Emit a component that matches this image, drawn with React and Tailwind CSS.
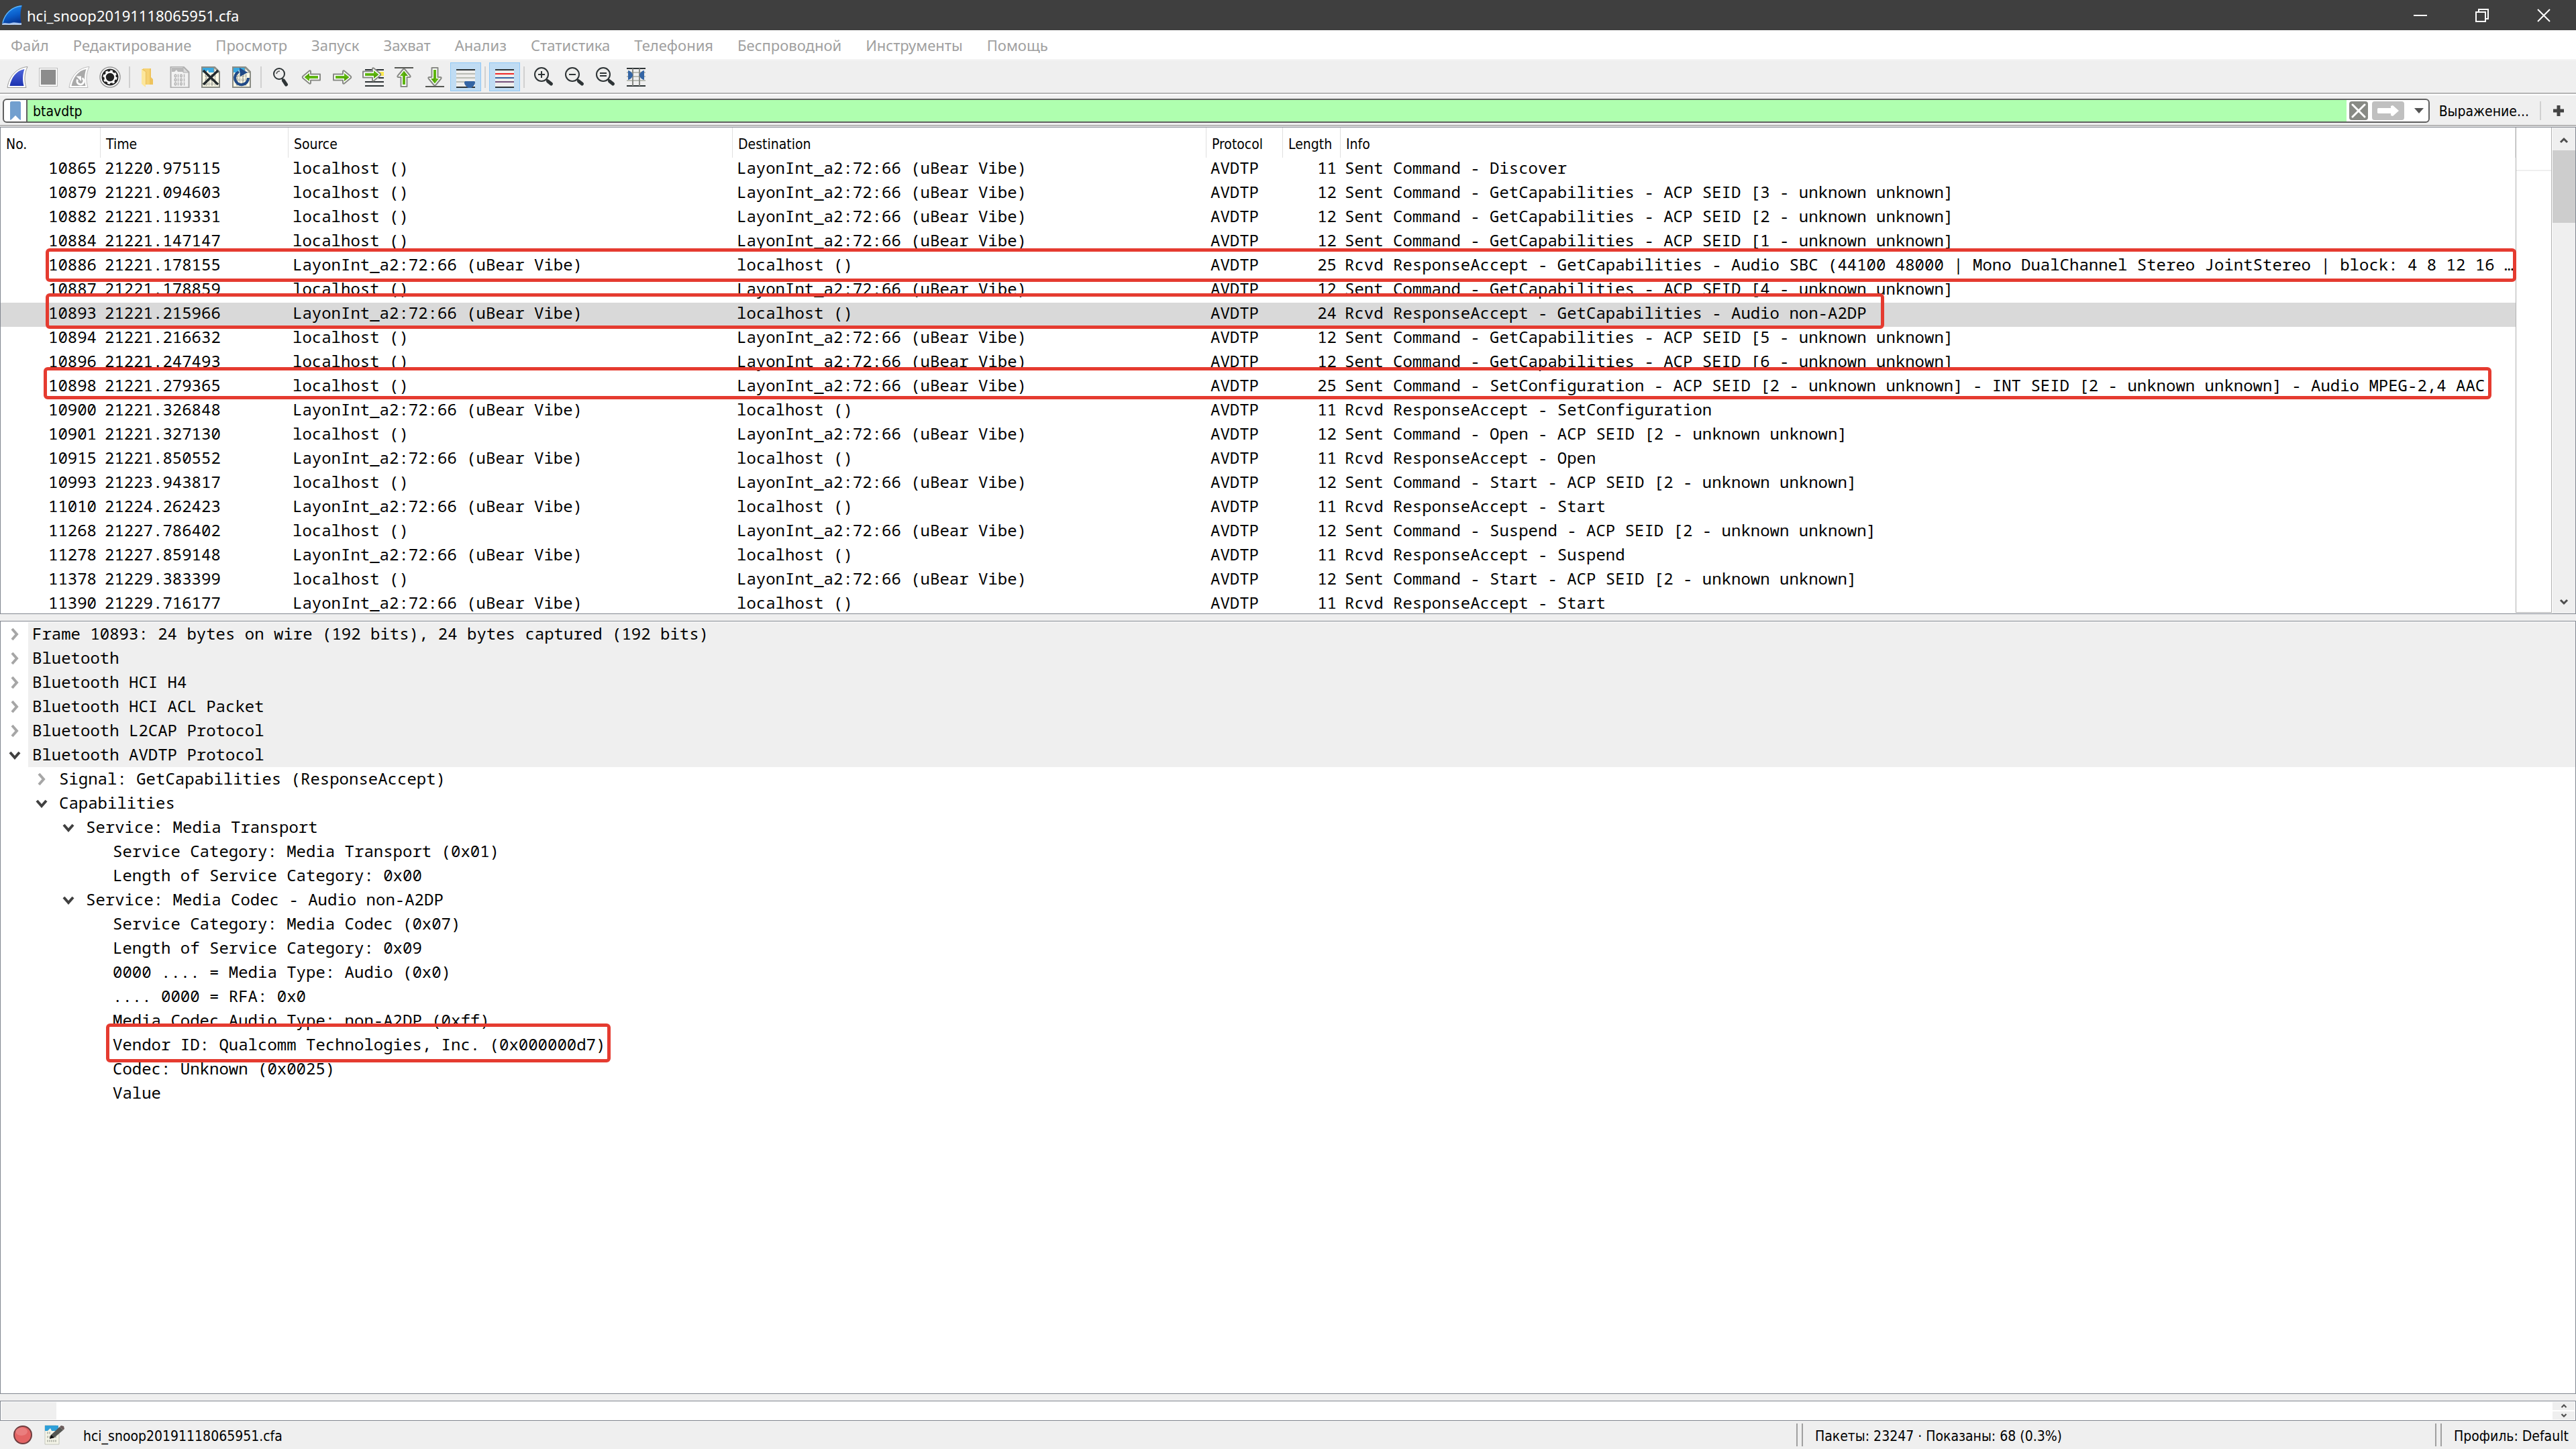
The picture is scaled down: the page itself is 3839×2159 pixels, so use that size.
import React, { useState } from 'react';

const UBEAR = 'LayonInt_a2:72:66 (uBear Vibe)';
const LOCAL = 'localhost ()';

const menus = [
  'Файл',
  'Редактирование',
  'Просмотр',
  'Запуск',
  'Захват',
  'Анализ',
  'Статистика',
  'Телефония',
  'Беспроводной',
  'Инструменты',
  'Помощь'
];

const packets = [
  { no: 10865, time: '21220.975115', out: true, len: 11, info: 'Sent Command - Discover' },
  { no: 10879, time: '21221.094603', out: true, len: 12, info: 'Sent Command - GetCapabilities - ACP SEID [3 - unknown unknown]' },
  { no: 10882, time: '21221.119331', out: true, len: 12, info: 'Sent Command - GetCapabilities - ACP SEID [2 - unknown unknown]' },
  { no: 10884, time: '21221.147147', out: true, len: 12, info: 'Sent Command - GetCapabilities - ACP SEID [1 - unknown unknown]' },
  { no: 10886, time: '21221.178155', out: false, len: 25, info: 'Rcvd ResponseAccept - GetCapabilities - Audio SBC (44100 48000 | Mono DualChannel Stereo JointStereo | block: 4 8 12 16 …' },
  { no: 10887, time: '21221.178859', out: true, len: 12, info: 'Sent Command - GetCapabilities - ACP SEID [4 - unknown unknown]' },
  { no: 10893, time: '21221.215966', out: false, len: 24, info: 'Rcvd ResponseAccept - GetCapabilities - Audio non-A2DP' },
  { no: 10894, time: '21221.216632', out: true, len: 12, info: 'Sent Command - GetCapabilities - ACP SEID [5 - unknown unknown]' },
  { no: 10896, time: '21221.247493', out: true, len: 12, info: 'Sent Command - GetCapabilities - ACP SEID [6 - unknown unknown]' },
  { no: 10898, time: '21221.279365', out: true, len: 25, info: 'Sent Command - SetConfiguration - ACP SEID [2 - unknown unknown] - INT SEID [2 - unknown unknown] - Audio MPEG-2,4 AAC' },
  { no: 10900, time: '21221.326848', out: false, len: 11, info: 'Rcvd ResponseAccept - SetConfiguration' },
  { no: 10901, time: '21221.327130', out: true, len: 12, info: 'Sent Command - Open - ACP SEID [2 - unknown unknown]' },
  { no: 10915, time: '21221.850552', out: false, len: 11, info: 'Rcvd ResponseAccept - Open' },
  { no: 10993, time: '21223.943817', out: true, len: 12, info: 'Sent Command - Start - ACP SEID [2 - unknown unknown]' },
  { no: 11010, time: '21224.262423', out: false, len: 11, info: 'Rcvd ResponseAccept - Start' },
  { no: 11268, time: '21227.786402', out: true, len: 12, info: 'Sent Command - Suspend - ACP SEID [2 - unknown unknown]' },
  { no: 11278, time: '21227.859148', out: false, len: 11, info: 'Rcvd ResponseAccept - Suspend' },
  { no: 11378, time: '21229.383399', out: true, len: 12, info: 'Sent Command - Start - ACP SEID [2 - unknown unknown]' },
  { no: 11390, time: '21229.716177', out: false, len: 11, info: 'Rcvd ResponseAccept - Start' }
];

const columns = [
  { name: 'No.', col: 'w-[149px]' },
  { name: 'Time', col: 'w-[280px]' },
  { name: 'Source', col: 'w-[662px]' },
  { name: 'Destination', col: 'w-[706px]' },
  { name: 'Protocol', col: 'w-[114px]' },
  { name: 'Length', col: 'w-[86px]' },
  { name: 'Info', col: '' }
];

// state: open / closed / leaf
const details = [
  { level: 0, state: 'closed', text: 'Frame 10893: 24 bytes on wire (192 bits), 24 bytes captured (192 bits)' },
  { level: 0, state: 'closed', text: 'Bluetooth' },
  { level: 0, state: 'closed', text: 'Bluetooth HCI H4' },
  { level: 0, state: 'closed', text: 'Bluetooth HCI ACL Packet' },
  { level: 0, state: 'closed', text: 'Bluetooth L2CAP Protocol' },
  { level: 0, state: 'open', text: 'Bluetooth AVDTP Protocol' },
  { level: 1, state: 'closed', text: 'Signal: GetCapabilities (ResponseAccept)' },
  { level: 1, state: 'open', text: 'Capabilities' },
  { level: 2, state: 'open', text: 'Service: Media Transport' },
  { level: 3, state: 'leaf', text: 'Service Category: Media Transport (0x01)' },
  { level: 3, state: 'leaf', text: 'Length of Service Category: 0x00' },
  { level: 2, state: 'open', text: 'Service: Media Codec - Audio non-A2DP' },
  { level: 3, state: 'leaf', text: 'Service Category: Media Codec (0x07)' },
  { level: 3, state: 'leaf', text: 'Length of Service Category: 0x09' },
  { level: 3, state: 'leaf', text: '0000 .... = Media Type: Audio (0x0)' },
  { level: 3, state: 'leaf', text: '.... 0000 = RFA: 0x0' },
  { level: 3, state: 'leaf', text: 'Media Codec Audio Type: non-A2DP (0xff)' },
  { level: 3, state: 'leaf', text: 'Vendor ID: Qualcomm Technologies, Inc. (0x000000d7)' },
  { level: 3, state: 'leaf', text: 'Codec: Unknown (0x0025)' },
  { level: 3, state: 'leaf', text: 'Value' }
];

const indent = ['pl-0', 'pl-10', 'pl-20', 'pl-[120px]'];

/* ---------- icons ---------- */

const Svg = ({ w = 32, h = 32, children }) => (
  <svg width={w} height={h} viewBox={`0 0 ${w} ${h}`} fill="none" className="block shrink-0" aria-hidden="true">
    {children}
  </svg>
);

const AppLogo = () => (
  <Svg w={32} h={32}>
    <defs>
      <linearGradient id="logo" x1="0.3" y1="0" x2="0.6" y2="1">
        <stop offset="0" stopColor="#1d8af0" />
        <stop offset="0.55" stopColor="#0a5cc8" />
        <stop offset="1" stopColor="#06308a" />
      </linearGradient>
    </defs>
    <path d="M1 30C3 16 14 2 31 1c-3 8-3 17-1 29z" fill="url(#logo)" />
    <path d="M2 27C5 14 15 3 30 2" stroke="#5db4f7" strokeWidth="1.5" />
    <path d="M1 28c5-2 9 1 14-1s10 1 15 0v3H1z" fill="#8fb4ea" />
    <path d="M2 29c6-1 9 1 14 0s9 1 14 0" stroke="#e4effc" strokeWidth="1" />
  </Svg>
);

const FinIcon = () => (
  <Svg>
    <defs>
      <linearGradient id="fin" x1="0" y1="0" x2="0" y2="1">
        <stop offset="0" stopColor="#4f67dc" />
        <stop offset="1" stopColor="#1c32b0" />
      </linearGradient>
    </defs>
    <path d="M1 31.500C3 17 13 2 31 0.500c-5 10-5 21-2 31z" fill="#fff" stroke="#999" />
    <path d="M4.500 29C7 17 14 6 26.500 4c-3 8-3 17-1 25z" fill="url(#fin)" />
  </Svg>
);

const StopIcon = () => (
  <Svg>
    <rect x="2.500" y="2.500" width="27" height="27" fill="#fff" stroke="#bbb" />
    <rect x="4" y="4" width="24" height="24" fill="#eee" />
    <rect x="5" y="5" width="22" height="22" fill="#8c8c8c" />
  </Svg>
);

const RestartIcon = () => (
  <Svg>
    <path d="M1 31.500C3 17 13 2 31 0.500c-5 10-5 21-2 31z" fill="#fff" stroke="#bbb" />
    <path d="M4.500 29C7 17 14 6 26.500 4c-3 8-3 17-1 25z" fill="#a9a9a9" />
    <path d="M20.500 17.500a5 5 0 1 1-7 2" stroke="#fff" strokeWidth="3" />
    <path d="M11.500 14.500h7.500v7.500z" fill="#fff" />
  </Svg>
);

const OptionsIcon = () => (
  <Svg>
    <circle cx="16" cy="16" r="15" fill="#fff" stroke="#999" strokeWidth="1.500" />
    <circle cx="16" cy="16" r="12.500" fill="#222" />
    <circle cx="16" cy="16" r="7.500" stroke="#fff" strokeWidth="2.500" />
    <circle cx="16" cy="16" r="9.300" stroke="#fff" strokeWidth="2.500" strokeDasharray="3.600 3.700" />
    <circle cx="16" cy="16" r="5" fill="#222" />
  </Svg>
);

const FolderIcon = () => (
  <Svg>
    <path d="M7 3h12v17h3v7H7z" fill="#f6d273" />
    <path d="M19 3h-2v24h5v-8l-3-3z" fill="#eec35c" />
    <path d="M5 4l6 4v23l-6-5z" fill="#fce69c" />
    <path d="M5 4h2l5 4v19h-1V8z" fill="#e9bf5c" />
  </Svg>
);

const Bits = ({ fill }) => (
  <g stroke={fill} strokeWidth="1.500">
    {[13, 19, 25].map((y) => (
      <g key={y}>
        <ellipse cx="9.500" cy={y + 1} rx="1.300" ry="1.900" />
        <path d={`M13.500 ${y - 1.500}v5M22.500 ${y - 1.500}v5`} />
        <ellipse cx="18" cy={y + 1} rx="1.300" ry="1.900" />
      </g>
    ))}
  </g>
);

const SaveIcon = () => (
  <Svg>
    <path d="M2.500 0.500h19l8 8v23h-27z" fill="#f2f2f2" stroke="#b0b0b0" strokeWidth="2" />
    <path d="M4 2h17v6H13l-2-3-3 3H4z" fill="#b9b9b9" />
    <path d="M21 1l8 8h-8z" fill="#d9d9d9" stroke="#b0b0b0" />
    <Bits fill="#b3b3b3" />
  </Svg>
);

const DocBase = () => (
  <>
    <path d="M3 1h19l7 7v23H3z" fill="#fdfbe8" stroke="#8b8d85" strokeWidth="2" />
    <path d="M4 2h17v7H13l-1-4-3 4H4z" fill="#3aa9e0" />
    <path d="M21 2l7 7h-7z" fill="#eef0ea" stroke="#8b8d85" />
    <Bits fill="#a5a79d" />
  </>
);

const CloseFileIcon = () => (
  <Svg>
    <DocBase />
    <path d="M5 6l22 21M27 6L5 27" stroke="#22292c" strokeWidth="3.500" />
  </Svg>
);

const ReloadIcon = () => (
  <Svg>
    <DocBase />
    <path d="M12 8a10 10 0 1 0 14 9" stroke="#204a87" strokeWidth="4" />
    <path d="M13 2l12 7-11 6z" fill="#204a87" />
  </Svg>
);

const FindIcon = () => (
  <Svg>
    <circle cx="14" cy="11" r="8" fill="#eee" stroke="#2e3436" strokeWidth="2" />
    <path d="M10 11a5 5 0 0 1 5-4" stroke="#555" strokeWidth="1.500" />
    <path d="M18 18l3 3" stroke="#2e3436" strokeWidth="2" />
    <path d="M20.500 21l4 6" stroke="#2e3436" strokeWidth="5" strokeLinecap="round" />
  </Svg>
);

// right pointing arrow, rotated around the centre for the other directions
const Arrow = ({ turn = 0 }) => (
  <g transform={`rotate(${turn} 16 16)`}>
    <path
      d="M3 11.500h14V7.500c0-1.500 1.500-1.500 2.500-.500l9 7.500c1 1 1 2 0 3l-9 7.500c-1 1-2.500 1-2.500-.500v-4H3z"
      fill="#fff"
      stroke="#888a85"
      strokeWidth="2"
      strokeLinejoin="round"
    />
    <path d="M6 14h13v-4l7.500 6-7.500 6v-4H6z" fill="#5fb711" />
    <path d="M6 17h13v5l7-6h-7z" fill="#4e9a06" opacity=".6" />
  </g>
);

const BackIcon = () => (
  <Svg>
    <Arrow turn={180} />
  </Svg>
);

const ForwardIcon = () => (
  <Svg>
    <Arrow />
  </Svg>
);

const GotoIcon = () => (
  <Svg w={36} h={32}>
    <path d="M6 5h28M26 17h8M6 23h28M6 29h28" stroke="#2e3436" strokeWidth="2" />
    <path d="M24 8h10v6H24z" fill="#fce94f" />
    <g transform="translate(0 -4)">
      <Arrow />
    </g>
  </Svg>
);

const FirstIcon = () => (
  <Svg>
    <path d="M2 2h28" stroke="#555753" strokeWidth="2" />
    <g transform="translate(0 1)">
      <Arrow turn={-90} />
    </g>
  </Svg>
);

const LastIcon = () => (
  <Svg>
    <path d="M2 30h28" stroke="#555753" strokeWidth="2" />
    <g transform="translate(0 -1)">
      <Arrow turn={90} />
    </g>
  </Svg>
);

const AutoScrollIcon = () => (
  <Svg>
    <path d="M2 5h28v26H2z" fill="#eeeeec" />
    <path d="M2 5h28M2 31h28" stroke="#2e3436" strokeWidth="2" />
    <path d="M2 11h28M2 17h28M2 23h28" stroke="#babdb6" strokeWidth="2" />
    <path d="M14 24c0-1.500 1-2 2-2h12c1 0 2 .500 2 2 0 3-3 6-5 7.500-2 1-4 1-6 0-2-1.500-5-4.500-5-7.500z" fill="#3465a4" />
  </Svg>
);

const ColorizeIcon = () => (
  <Svg>
    <path d="M2 5h28v26H2z" fill="#eeeeec" />
    <path d="M2 5h28M2 31h28" stroke="#2e3436" strokeWidth="2" />
    <path d="M2 11h28" stroke="#ef2929" strokeWidth="2" />
    <path d="M2 17h28" stroke="#3465a4" strokeWidth="2" />
    <path d="M2 23h28" stroke="#75507b" strokeWidth="2" />
  </Svg>
);

const ZoomIcon = ({ sign }) => (
  <Svg>
    <circle cx="13" cy="12" r="10" fill="#eeeeec" stroke="#2e3436" strokeWidth="2" />
    <path d={sign} stroke="#2e3436" strokeWidth="2" />
    <path d="M20 19l3 3" stroke="#2e3436" strokeWidth="3" />
    <path d="M22.500 22l5 4" stroke="#2e3436" strokeWidth="5" strokeLinecap="round" />
  </Svg>
);

const ResizeIcon = () => (
  <Svg>
    <path d="M2 9h28M2 15h28M2 21h28" stroke="#babdb6" strokeWidth="2" />
    <path d="M2 3h28M2 29h28" stroke="#2e3436" strokeWidth="2" />
    <path d="M11 3v26M21 3v26" stroke="#888a85" strokeWidth="2" />
    <path d="M4 6c3 0 7 4 7 7s-4 7-7 7zM28 6c-3 0-7 4-7 7s4 7 7 7z" fill="#3465a4" />
  </Svg>
);

const CommentIcon = () => (
  <Svg>
    <path d="M3 2h17l4 4v24H3z" fill="#f4f4e8" stroke="#c4c6bc" />
    <path d="M3 2h20v8H13l-2-4-4 4H3z" fill="#2f9fd8" />
    <path d="M6 13h6M6 19h5M15 19h6M6 25h15" stroke="#b9bbb0" strokeWidth="3" strokeDasharray="2 1" />
    <path d="M12 16L25 4l5 5-13 11-7 1z" fill="#555753" />
    <path d="M25 4l2-2 4 1 1 4-2 2z" fill="#6b5b5b" />
    <path d="M12 16l5 4-7 2z" fill="#111" />
  </Svg>
);

const chevrons = {
  up: { d: 'M5 13l5-5 5 5', stroke: '#4d4d4d', width: 3 },
  down: { d: 'M5 7l5 5 5-5', stroke: '#4d4d4d', width: 3 },
  closed: { d: 'M6 2l7 8-7 8', stroke: '#a6a6a6', width: 4 },
  open: { d: 'M3 6l7 8 7-8', stroke: '#404040', width: 4 }
};

const Chevron = ({ dir, size = 20 }) => (
  <svg width={size} height={size} viewBox="0 0 20 20" fill="none" className="block shrink-0" aria-hidden="true">
    <path d={chevrons[dir].d} stroke={chevrons[dir].stroke} strokeWidth={chevrons[dir].width} />
  </svg>
);

/* ---------- pieces ---------- */

const ToolButton = ({ label, active, children }) => (
  <button
    type="button"
    aria-label={label}
    className={`flex h-[43px] w-[46px] shrink-0 items-center justify-center border ${
      active ? 'border-[#90c8f6] bg-[#c0dcf3]' : 'border-transparent'
    }`}
  >
    {children}
  </button>
);

const ToolSeparator = () => (
  <div className="flex w-3 shrink-0 justify-center">
    <div className="h-8 w-[2px] bg-[#d0d0d0]" />
  </div>
);

const Highlight = ({ className }) => (
  <div className={`pointer-events-none absolute rounded-md border-[5px] border-[#e53b30] ${className}`} />
);

const TitleBar = () => (
  <header className="flex h-[45px] shrink-0 items-center bg-[#3f3f3f] pl-[2px] pr-[2px] text-white">
    <AppLogo />
    <h1 className="ml-[6px] text-[22px] leading-[32px]">hci_snoop20191118065951.cfa</h1>
    <div className="ml-auto flex">
      <button type="button" aria-label="Minimize" className="flex h-10 w-[92px] items-center justify-center">
        <Svg w={20} h={20}>
          <path d="M0 10h20" stroke="#fff" strokeWidth="2" />
        </Svg>
      </button>
      <button type="button" aria-label="Restore" className="flex h-10 w-[92px] items-center justify-center">
        <Svg w={20} h={20}>
          <path d="M1 5h14v14H1zM5 5V1h14v14h-4" stroke="#fff" strokeWidth="2" />
        </Svg>
      </button>
      <button type="button" aria-label="Close" className="flex h-10 w-[92px] items-center justify-center">
        <Svg w={20} h={20}>
          <path d="M1 1l18 18M19 1L1 19" stroke="#fff" strokeWidth="2" />
        </Svg>
      </button>
    </div>
  </header>
);

const MenuBar = () => (
  <nav className="flex h-[45px] shrink-0 items-center gap-9 border-b-2 border-[#f4f4f4] bg-white pl-4">
    {menus.map((name) => (
      <button key={name} type="button" className="text-[22px] leading-[32px] text-[#a0a0a0]">
        {name}
      </button>
    ))}
  </nav>
);

const ToolBar = () => (
  <div className="flex h-[52px] shrink-0 flex-col bg-[#efefef]">
    <div className="flex flex-1 items-center pl-[3px] pt-px">
      <ToolButton label="Start capture"><FinIcon /></ToolButton>
      <ToolButton label="Stop capture"><StopIcon /></ToolButton>
      <ToolButton label="Restart capture"><RestartIcon /></ToolButton>
      <ToolButton label="Capture options"><OptionsIcon /></ToolButton>
      <ToolSeparator />
      <ToolButton label="Open file"><FolderIcon /></ToolButton>
      <ToolButton label="Save file"><SaveIcon /></ToolButton>
      <ToolButton label="Close file"><CloseFileIcon /></ToolButton>
      <ToolButton label="Reload file"><ReloadIcon /></ToolButton>
      <ToolSeparator />
      <ToolButton label="Find packet"><FindIcon /></ToolButton>
      <ToolButton label="Previous packet"><BackIcon /></ToolButton>
      <ToolButton label="Next packet"><ForwardIcon /></ToolButton>
      <ToolButton label="Go to packet"><GotoIcon /></ToolButton>
      <ToolButton label="First packet"><FirstIcon /></ToolButton>
      <ToolButton label="Last packet"><LastIcon /></ToolButton>
      <ToolButton label="Auto scroll" active><AutoScrollIcon /></ToolButton>
      <ToolSeparator />
      <ToolButton label="Colorize" active><ColorizeIcon /></ToolButton>
      <ToolSeparator />
      <ToolButton label="Zoom in"><ZoomIcon sign="M8 12h10M13 7v10" /></ToolButton>
      <ToolButton label="Zoom out"><ZoomIcon sign="M8 12h10" /></ToolButton>
      <ToolButton label="Normal size"><ZoomIcon sign="M8 10h10M8 14h10" /></ToolButton>
      <ToolButton label="Resize columns"><ResizeIcon /></ToolButton>
    </div>
    <div className="h-1 border-t-2 border-[#b5b5b5] bg-white" />
  </div>
);

const FilterBar = () => {
  const [filter, setFilter] = useState('btavdtp');

  return (
    <div className="flex h-[46px] shrink-0 items-center border-b-2 border-[#b5b5b5] bg-[#efefef] pl-1 pt-[2px] text-black">
      <div className="flex h-9 flex-1 items-stretch overflow-hidden rounded-md border-2 border-[#606060] bg-white">
        <button type="button" aria-label="Bookmarks" className="flex w-[35px] items-center justify-center border-r-2 border-[#606060]">
          <Svg w={16} h={28}>
            <path d="M0 2c0-1 1-2 2-2h12c1 0 2 1 2 2v26l-2-1-6-6-6 6-2 1z" fill="#729fcf" />
          </Svg>
        </button>
        <input
          aria-label="Display filter"
          value={filter}
          onChange={(e) => setFilter(e.target.value)}
          className="min-w-0 flex-1 bg-[#afffaf] pl-2 pt-1 font-['DejaVu_Sans_Condensed','Liberation_Sans',sans-serif] text-[21px] outline-none"
        />
        <div className="flex items-center pl-1">
          <button type="button" aria-label="Clear filter" className="flex size-7 items-center justify-center rounded-sm bg-[#888a85]">
            <Svg w={22} h={22}>
              <path d="M2 2l18 18M20 2L2 20" stroke="#fff" strokeWidth="3" strokeLinecap="round" />
            </Svg>
          </button>
          <button type="button" aria-label="Apply filter" className="ml-[6px] flex h-7 w-12 items-center justify-center rounded-sm bg-[#c0c0c0]">
            <Svg w={32} h={16}>
              <path d="M1 4h19V1l3-1 9 8-9 8-3-1v-3H1l-1-1V5z" fill="#fff" />
            </Svg>
          </button>
          <button type="button" aria-label="Recent filters" className="flex h-7 w-9 items-center justify-center pl-2">
            <Svg w={14} h={8}>
              <path d="M0 0h14L7 8z" fill="#555" />
            </Svg>
          </button>
        </div>
      </div>
      <button type="button" className="ml-[14px] pt-[2px] font-['DejaVu_Sans_Condensed','Liberation_Sans',sans-serif] text-[21px] leading-7">
        Выражение...
      </button>
      <div className="ml-4 h-7 w-[2px] bg-[#d0d0d0]" />
      <button type="button" aria-label="Add filter button" className="flex w-[52px] items-center justify-center">
        <Svg w={16} h={16}>
          <path d="M8 0v16M0 8h16" stroke="#444" strokeWidth="5" />
        </Svg>
      </button>
    </div>
  );
};

const PacketList = () => {
  const [selected, setSelected] = useState(10893);

  return (
    <section className="relative mt-px flex h-[726px] shrink-0 overflow-hidden border border-[#828790] bg-white">
      <div className="min-w-0 flex-1">
        <table className="w-full table-fixed border-separate border-spacing-0">
          <colgroup>
            {columns.map((c) => (
              <col key={c.name} className={c.col} />
            ))}
          </colgroup>
          <thead>
            <tr className="h-[45px]">
              {columns.map((c) => (
                <th
                  key={c.name}
                  scope="col"
                  className="border-r border-[#e0e0e0] p-0 pl-2 pt-1 text-left font-['DejaVu_Sans_Condensed','Liberation_Sans',sans-serif] text-[21px] font-normal leading-7"
                >
                  {c.name}
                </th>
              ))}
            </tr>
          </thead>
          <tbody className="font-['Noto_Sans_Mono','Liberation_Mono',monospace] text-[24px] leading-[30px]">
            {packets.map((p) => (
              <tr
                key={p.no}
                onClick={() => setSelected(p.no)}
                className={`h-9 whitespace-pre align-top ${p.no === selected ? 'bg-[#d9d9d9]' : ''}`}
              >
                <td className="p-0 pr-[6px] text-right">{p.no}</td>
                <td className="p-0 pl-[6px]">{p.time}</td>
                <td className="p-0 pl-[6px]">{p.out ? LOCAL : UBEAR}</td>
                <td className="p-0 pl-[6px]">{p.out ? UBEAR : LOCAL}</td>
                <td className="p-0 pl-[6px]">AVDTP</td>
                <td className="p-0 pr-[6px] text-right">{p.len}</td>
                <td className="p-0 pl-[6px]">{p.info}</td>
              </tr>
            ))}
          </tbody>
        </table>
      </div>

      {/* minimap */}
      <div className="mb-px w-[54px] shrink-0 border-x border-b border-[#b0b0b0]">
        <div className="h-[65px] border-b-2 border-[#efefef]" />
      </div>

      <div className="ml-px flex w-[34px] shrink-0 flex-col items-center bg-[#efefef]">
        <button type="button" aria-label="Scroll up" className="flex h-[34px] w-full shrink-0 items-center justify-center pt-1">
          <Chevron dir="up" />
        </button>
        <div className="h-[108px] w-full bg-[#cdcdcd]" />
        <button type="button" aria-label="Scroll down" className="mt-auto flex h-[34px] w-full shrink-0 items-center justify-center">
          <Chevron dir="down" />
        </button>
      </div>

      <Highlight className="left-[67px] right-[88px] top-[180px] h-[50px]" />
      <Highlight className="left-[67px] top-[247px] h-[53px] w-[2740px]" />
      <Highlight className="left-[64px] top-[357px] h-[48px] w-[3648px]" />
    </section>
  );
};

const PacketDetails = () => (
  <section className="relative mt-[10px] min-h-0 flex-1 overflow-hidden border border-[#828790] bg-white pt-px">
    <ul className="font-['Noto_Sans_Mono','Liberation_Mono',monospace] text-[24px] leading-[34px] text-black">
      {details.map((d) => (
        <li key={d.text} className={`flex h-9 ${indent[d.level]}`}>
          <div className="flex w-[41px] shrink-0 items-center justify-center">
            {d.state !== 'leaf' && (
              <button type="button" aria-label={d.state === 'open' ? 'Collapse' : 'Expand'}>
                <Chevron dir={d.state} />
              </button>
            )}
          </div>
          <span className={`flex-1 whitespace-pre pl-[6px] ${d.level === 0 ? 'bg-[#efefef]' : ''}`}>{d.text}</span>
        </li>
      ))}
    </ul>
    <Highlight className="left-[157px] top-[599px] h-[58px] w-[752px]" />
  </section>
);

const BytesPane = () => (
  <section className="mt-[10px] flex h-[30px] shrink-0 justify-between border border-[#828790] bg-white p-px">
    <div className="w-[82px] bg-[#efefef]" />
    <div className="flex w-[33px] flex-col justify-between">
      <button type="button" aria-label="Scroll bytes up" className="flex h-3 items-center justify-center bg-[#efefef]">
        <Chevron dir="up" size={14} />
      </button>
      <button type="button" aria-label="Scroll bytes down" className="flex h-3 items-center justify-center bg-[#efefef]">
        <Chevron dir="down" size={14} />
      </button>
    </div>
  </section>
);

const Divider = () => <div className="h-[34px] w-[10px] shrink-0 border-x-2 border-[#a0a0a0]" />;

const StatusBar = () => (
  <footer className="flex h-[42px] shrink-0 items-center font-['DejaVu_Sans_Condensed','Liberation_Sans',sans-serif] text-[21px] leading-7 text-black">
    <button type="button" aria-label="Expert info" className="ml-5">
      <Svg w={28} h={28}>
        <circle cx="14" cy="14" r="13" fill="#e46464" stroke="#6f3d3f" strokeWidth="2" />
        <ellipse cx="12" cy="9" rx="9" ry="6" fill="#ee8f8f" opacity=".6" />
      </Svg>
    </button>
    <button type="button" aria-label="Capture comment" className="ml-4">
      <CommentIcon />
    </button>
    <span className="ml-7 flex-1 pt-1">hci_snoop20191118065951.cfa</span>
    <Divider />
    <span className="w-[942px] shrink-0 pl-[18px] pt-1">Пакеты: 23247 · Показаны: 68 (0.3%)</span>
    <Divider />
    <span className="w-[200px] shrink-0 pl-[18px] pt-1">Профиль: Default</span>
  </footer>
);

const App = () => (
  <div className="flex h-screen flex-col overflow-hidden bg-[#efefef] font-['Noto_Sans','Open_Sans',sans-serif] text-black">
    <TitleBar />
    <MenuBar />
    <ToolBar />
    <FilterBar />
    <PacketList />
    <PacketDetails />
    <BytesPane />
    <StatusBar />
  </div>
);

export default App;
